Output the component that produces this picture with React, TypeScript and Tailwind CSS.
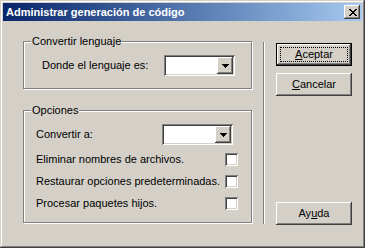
const raised =
  "shadow-[inset_-1px_-1px_#404040,inset_1px_1px_#ffffff,inset_-2px_-2px_#808080,inset_2px_2px_#d4d0c8]"
const sunken =
  "shadow-[inset_1px_1px_#808080,inset_-1px_-1px_#ffffff,inset_2px_2px_#404040,inset_-2px_-2px_#d4d0c8]"

const CloseGlyph = () => {
  const rows = ["11000011", "01100110", "00111100", "00011000", "00111100", "01100110", "11000011"]
  return (
    <svg width="8" height="7" shapeRendering="crispEdges">
      {rows.map((r, y) =>
        r.split("").map((c, x) => (c === "1" ? <rect key={`${x}-${y}`} x={x} y={y} width="1" height="1" fill="#000" /> : null))
      )}
    </svg>
  )
}

const Combo = () => (
  <div className={`w-[71px] h-[21px] bg-white p-[2px] flex justify-end ${sunken}`}>
    <div className={`w-[16px] h-[17px] bg-[#d4d0c8] flex items-center justify-center ${raised}`}>
      <svg width="7" height="4" shapeRendering="crispEdges">
        <rect x="0" y="0" width="7" height="1" fill="#000" />
        <rect x="1" y="1" width="5" height="1" fill="#000" />
        <rect x="2" y="2" width="3" height="1" fill="#000" />
        <rect x="3" y="3" width="1" height="1" fill="#000" />
      </svg>
    </div>
  </div>
)

const Check = () => <div className={`w-[13px] h-[13px] bg-white ${sunken}`} />

const GroupBox = ({ title, className, children }: { title: string; className: string; children: React.ReactNode }) => (
  <div className={`relative border border-[#808080] shadow-[1px_1px_0_#ffffff,inset_1px_1px_0_#ffffff] ${className}`}>
    <span className="absolute -top-[7px] left-[7px] px-[1px] bg-[#d4d0c8] leading-[13px]">{title}</span>
    {children}
  </div>
)

const Button = ({ children, isDefault, className = "" }: { children: React.ReactNode; isDefault?: boolean; className?: string }) =>
  isDefault ? (
    <div className={`relative w-[76px] h-[23px] border border-black ${className}`}>
      <div className={`w-full h-full flex items-center justify-center ${raised}`}>{children}</div>
      <span className="absolute inset-[3px] border border-dotted border-black" />
    </div>
  ) : (
    <div className={`w-[76px] h-[23px] flex items-center justify-center ${raised} ${className}`}>{children}</div>
  )

export default function App() {
  return (
    <div
      className={`w-[365px] h-[248px] bg-[#d4d0c8] p-[3px] flex flex-col font-['Liberation_Sans',Arial,sans-serif] text-[11px] text-black shadow-[inset_-1px_-1px_#404040,inset_1px_1px_#d4d0c8,inset_-2px_-2px_#808080,inset_2px_2px_#ffffff]`}
    >
      <div className="h-[18px] flex items-center justify-between bg-linear-to-r from-[#0a246a] to-[#a6caf0] pl-[3px] pr-[2px]">
        <span className="text-white font-bold text-[11px]">Administrar generación de código</span>
        <div className={`w-[16px] h-[14px] bg-[#d4d0c8] flex items-center justify-center pl-[1px] ${raised}`}>
          <CloseGlyph />
        </div>
      </div>

      <div className="flex pl-[20px]">
        <div className="w-[229px] pt-[20px]">
          <GroupBox title="Convertir lenguaje" className="h-[48px]">
            <div className="flex items-center justify-between pl-[18px] pr-[16px] pt-[13px]">
              <span>Donde el lenguaje es:</span>
              <Combo />
            </div>
          </GroupBox>

          <GroupBox title="Opciones" className="h-[113px] mt-[21px]">
            <div className="flex flex-col pl-[12px] pr-[13px] pt-[13px]">
              <div className="flex items-center justify-between pr-[5px]">
                <span>Convertir a:</span>
                <Combo />
              </div>
              <div className="flex flex-col gap-[9px] mt-[8px]">
                {["Eliminar nombres de archivos.", "Restaurar opciones predeterminadas.", "Procesar paquetes hijos."].map(t => (
                  <div key={t} className="flex items-center justify-between h-[13px]">
                    <span>{t}</span>
                    <Check />
                  </div>
                ))}
              </div>
            </div>
          </GroupBox>
        </div>

        <div className="ml-[11px] mt-[21px] w-[2px] h-[182px] border-l border-l-[#808080] border-r border-r-white" />

        <div className="ml-[11px] flex flex-col pt-[22px]">
          <Button isDefault>
            <span>
              <u>A</u>ceptar
            </span>
          </Button>
          <Button className="mt-[7px]">
            <span>
              <u>C</u>ancelar
            </span>
          </Button>
          <Button className="mt-[106px]">
            <span>
              Ay<u>u</u>da
            </span>
          </Button>
        </div>
      </div>
    </div>
  )
}
